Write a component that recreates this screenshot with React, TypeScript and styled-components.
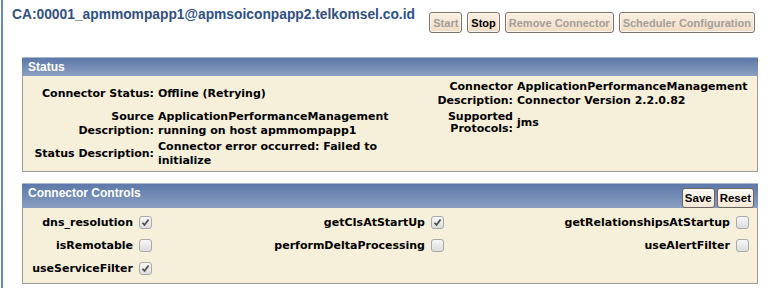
import React from "react";
import styled, { createGlobalStyle } from "styled-components";

const Global = createGlobalStyle`
  html, body { margin: 0; padding: 0; background: #ffffff; }
  body { font-family: "Liberation Sans", Arial, sans-serif; }
`;

const Page = styled.div`
  margin-left: 1px;
  border-left: 2px solid #6a87b9;
  min-height: 288px;
  box-sizing: border-box;
  width: 774px;
`;

const TopRow = styled.div`
  display: flex;
  align-items: flex-start;
  justify-content: space-between;
  height: 57px;
  padding: 7px 20px 0 9px;
  box-sizing: border-box;
`;

const Title = styled.div`
  font-family: "Liberation Sans", Arial, sans-serif;
  font-weight: bold;
  font-size: 13.8px;
  line-height: 16px;
  color: #2f5081;
`;

const ButtonBar = styled.div`
  display: flex;
  gap: 5px;
  margin-top: 5px;
`;

const ActionButton = styled.button<{ $enabled?: boolean }>`
  height: 21px;
  padding: 0 3px;
  font-family: "Liberation Sans", Arial, sans-serif;
  font-weight: bold;
  font-size: 11px;
  color: ${(p) => (p.$enabled ? "#000000" : "#a49e98")};
  background: linear-gradient(#fbf0e4, #f1dcc4);
  border: 1px solid #7d7266;
  border-radius: 3px;
  box-shadow: inset 0 0 0 1px #fff7ee;
  cursor: default;
`;

const Panels = styled.div`
  padding-left: 19px;
  display: flex;
  flex-direction: column;
  gap: 11px;
`;

const Panel = styled.section`
  width: 736px;
  box-sizing: border-box;
  border: 1px solid #9c9c9c;
  border-top: none;
  background: #f6efd9;
`;

const PanelHeader = styled.div<{ $tall?: boolean }>`
  display: flex;
  justify-content: space-between;
  align-items: flex-start;
  height: ${(p) => (p.$tall ? "25px" : "19px")};
  box-sizing: border-box;
  padding: 2px 4px 0 6px;
  background: linear-gradient(#5d78a9, #8a9fc1);
  border-top: 1px solid #a9b7cf;
  margin: 0 -1px;
`;

const PanelTitle = styled.div`
  font-family: "Liberation Sans", Arial, sans-serif;
  font-weight: bold;
  font-size: 12px;
  line-height: 14px;
  color: #ffffff;
`;

const HeaderButtons = styled.div`
  display: flex;
  gap: 2px;
  margin-top: 2px;
`;

const SmallButton = styled.button`
  height: 20px;
  padding: 0 2px;
  font-family: "Liberation Sans", Arial, sans-serif;
  font-weight: bold;
  font-size: 11.5px;
  color: #000;
  background: linear-gradient(#fffaf3, #f6e7d6);
  border: 1px solid #6e655c;
  border-radius: 3px;
  cursor: default;
`;

const StatusBody = styled.div`
  display: flex;
  justify-content: space-between;
  align-items: flex-start;
  padding: 4px 3px 3px 0;
  font-family: "DejaVu Sans", Verdana, sans-serif;
  font-weight: bold;
  font-size: 11px;
  line-height: 14px;
  color: #000;
`;

const FieldGrid = styled.div<{ $label: number; $value: number }>`
  display: grid;
  grid-template-columns: ${(p) => `${p.$label}px ${p.$value}px`};
  grid-auto-rows: minmax(28px, auto);
  column-gap: 4px;
  row-gap: 2px;
  align-items: center;
`;

const RightGrid = styled(FieldGrid)`
  grid-auto-rows: auto;
  row-gap: 3px;
  align-items: center;
`;

const Label = styled.div<{ $tight?: boolean }>`
  text-align: right;
  line-height: ${(p) => (p.$tight ? "12px" : "14px")};
`;

const Value = styled.div`
  text-align: left;
`;

const ControlsGrid = styled.div`
  display: grid;
  grid-template-columns: 106px 13px 267px 13px 1fr 13px;
  column-gap: 6px;
  grid-auto-rows: 23px;
  align-items: center;
  padding: 3px 8px 3px 4px;
  font-family: "DejaVu Sans", Verdana, sans-serif;
  font-weight: bold;
  font-size: 11px;
  color: #000;
`;

const CtlLabel = styled.div`
  text-align: right;
  white-space: nowrap;
`;

const Box = styled.span`
  display: inline-flex;
  align-items: center;
  justify-content: center;
  width: 13px;
  height: 13px;
  box-sizing: border-box;
  border: 1px solid #a9a9a9;
  border-radius: 3px;
  background: linear-gradient(#f7f7f7, #dcdcdc);
`;

const Check = ({ on }: { on: boolean }) => (
  <Box>
    {on && (
      <svg width="9" height="9" viewBox="0 0 9 9">
        <path d="M1.5 4.8 L3.5 7 L7.6 1.6" fill="none" stroke="#4a4a4a" strokeWidth="1.7" />
      </svg>
    )}
  </Box>
);

const controls: [string, boolean][] = [
  ["dns_resolution", true],
  ["getCIsAtStartUp", true],
  ["getRelationshipsAtStartup", false],
  ["isRemotable", false],
  ["performDeltaProcessing", false],
  ["useAlertFilter", false],
  ["useServiceFilter", true],
];

export default function App() {
  return (
    <>
      <Global />
      <Page>
        <TopRow>
          <Title>CA:00001_apmmompapp1@apmsoiconpapp2.telkomsel.co.id</Title>
          <ButtonBar>
            <ActionButton>Start</ActionButton>
            <ActionButton $enabled>Stop</ActionButton>
            <ActionButton>Remove Connector</ActionButton>
            <ActionButton>Scheduler Configuration</ActionButton>
          </ButtonBar>
        </TopRow>
        <Panels>
          <Panel>
            <PanelHeader>
              <PanelTitle>Status</PanelTitle>
            </PanelHeader>
            <StatusBody>
              <FieldGrid $label={131} $value={248}>
                <Label>Connector Status:</Label>
                <Value>Offline (Retrying)</Value>
                <Label>
                  Source
                  <br />
                  Description:
                </Label>
                <Value>ApplicationPerformanceManagement running on host apmmompapp1</Value>
                <Label>Status Description:</Label>
                <Value>Connector error occurred: Failed to initialize</Value>
              </FieldGrid>
              <RightGrid $label={100} $value={237}>
                <Label>
                  Connector
                  <br />
                  Description:
                </Label>
                <Value>ApplicationPerformanceManagement Connector Version 2.2.0.82</Value>
                <Label $tight>
                  Supported
                  <br />
                  Protocols:
                </Label>
                <Value>jms</Value>
              </RightGrid>
            </StatusBody>
          </Panel>
          <Panel>
            <PanelHeader $tall>
              <PanelTitle>Connector Controls</PanelTitle>
              <HeaderButtons>
                <SmallButton>Save</SmallButton>
                <SmallButton>Reset</SmallButton>
              </HeaderButtons>
            </PanelHeader>
            <ControlsGrid>
              {controls.map(([name, on]) => (
                <React.Fragment key={name}>
                  <CtlLabel>{name}</CtlLabel>
                  <Check on={on} />
                </React.Fragment>
              ))}
            </ControlsGrid>
          </Panel>
        </Panels>
      </Page>
    </>
  );
}
